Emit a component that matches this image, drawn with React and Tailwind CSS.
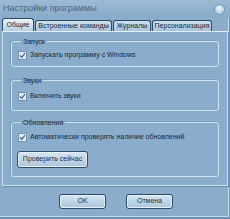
const stripes =
  'bg-[repeating-linear-gradient(180deg,#8eafcd_0px,#8eafcd_1px,#88aaca_1px,#88aaca_2px)]'

function Check({ label }) {
  return (
    <label className="flex items-center gap-[3px] whitespace-nowrap">
      <span className="flex h-[9px] w-[9px] items-center justify-center border border-[#7392b0] bg-[#e3ecf4]">
        <svg width="7" height="7" viewBox="0 0 7 7">
          <path d="M1 3.5 L2.8 5.3 L6 1.2" fill="none" stroke="#4a6482" strokeWidth="1.3" />
        </svg>
      </span>
      <span>{label}</span>
    </label>
  )
}

function Group({ title, className, children }) {
  return (
    <fieldset
      className={`mx-[8px] rounded-[3px] border border-[#d3e3f0] px-[6px] shadow-[-1px_-1px_0_#7d9dbc] ${className}`}
    >
      <legend className="ml-[3px] px-[2px] leading-[9px]">{title}</legend>
      {children}
    </fieldset>
  )
}

function Btn({ children, className }) {
  return (
    <button
      type="button"
      className={`whitespace-nowrap rounded-[3px] border border-[#2f4c6b] bg-[linear-gradient(180deg,#d6e6f2,#a9c5dc)] text-[#1c2e42] shadow-[inset_0_0_0_1px_#e8f1f8] ${className}`}
    >
      {children}
    </button>
  )
}

export default function App() {
  const tabs = [
    { name: 'Общие', w: 'w-[32px]', active: true },
    { name: 'Встроенные команды', w: 'w-[77px]' },
    { name: 'Журналы', w: 'w-[38px]' },
    { name: 'Персонализация', w: 'w-[60px]' },
  ]

  return (
    <div
      className={`flex h-[219px] w-[230px] flex-col overflow-hidden ${stripes} font-['Liberation_Sans',Arial,sans-serif] text-[7px] text-[#15283c] shadow-[inset_-1px_-2px_0_#6f92b4,inset_-2px_-3px_0_#c6dbec]`}
    >
      <div className="flex h-[18px] items-center justify-between bg-[linear-gradient(180deg,#9dbad4,#88abca)] pl-[3px] pr-[5px]">
        <span className="text-[9px] text-[#4b6580]">Настройки программы</span>
        <span className="h-[11px] w-[11px] rounded-full border border-[#7594b2] bg-[radial-gradient(circle_at_50%_35%,#eef5fb,#a3c0d8)]" />
      </div>

      <div className="flex h-[13px] items-end gap-[1px] pl-[2px]">
        {tabs.map((t) => (
          <div
            key={t.name}
            className={`flex ${t.w} items-center justify-center whitespace-nowrap rounded-t-[3px] border border-b-0 border-[#2d4a68] ${
              t.active
                ? 'h-[13px] bg-[linear-gradient(180deg,#eef5fa,#b7d0e4)]'
                : 'h-[11px] bg-[linear-gradient(180deg,#cfe0ee,#a6c3db)]'
            }`}
          >
            {t.name}
          </div>
        ))}
      </div>

      <div className="mx-[2px] flex h-[155px] flex-col border border-[#c9dcec] border-t-[#e4eef6] pt-[5px] shadow-[1px_1px_0_#6b8db0]">
        <Group title="Запуск" className="h-[30px]">
          <div className="pt-[4px]">
            <Check label="Запускать программу с Windows" />
          </div>
        </Group>
        <Group title="Звуки" className="mt-[9px] h-[35px]">
          <div className="pt-[6px]">
            <Check label="Включить звуки" />
          </div>
        </Group>
        <Group title="Обновления" className="mt-[7px] h-[59px]">
          <div className="pt-[5px]">
            <Check label="Автоматически проверять наличие обновлений" />
          </div>
          <Btn className="mt-[8px] h-[17px] w-[71px] -ml-[1px]">Проверить сейчас</Btn>
        </Group>
      </div>

      <div className="flex gap-[20px] pl-[59px] pt-[8px]">
        <Btn className="h-[15px] w-[47px]">OK</Btn>
        <Btn className="h-[15px] w-[47px]">Отмена</Btn>
      </div>
    </div>
  )
}
